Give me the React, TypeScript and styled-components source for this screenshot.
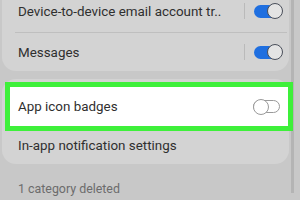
import styled, { createGlobalStyle } from "styled-components";

const GlobalStyle = createGlobalStyle`
    html, body {
        margin: 0;
        padding: 0;
        background-color: #c8c8c8;
    }
    body {
        width: 300px;
        height: 200px;
        overflow: hidden;
        font-family: Roboto, "Noto Sans", sans-serif;
    }
`;

const Screen = styled.div`
    display: flex;
    width: 300px;
    height: 200px;
`;

const Content = styled.div`
    display: flex;
    flex-direction: column;
    width: 287px;
    margin-left: 2px;
`;

const ScrollTrack = styled.div`
    width: 3px;
    height: 193px;
    margin-left: 2px;
    background-color: #b4b4b4;
`;

const Card = styled.div<{ $top?: boolean }>`
    display: flex;
    flex-direction: column;
    background-color: #d3d3d3;
    border-radius: ${(p) => (p.$top ? "0 0 14px 14px" : "14px")};
    margin-top: ${(p) => (p.$top ? "0" : "8px")};
    padding-top: ${(p) => (p.$top ? "0" : "8px")};
`;

const Row = styled.div<{ $height: number; $pb?: number; $highlight?: boolean }>`
    display: flex;
    align-items: center;
    justify-content: space-between;
    box-sizing: border-box;
    height: ${(p) => p.$height}px;
    padding: 0 8px ${(p) => p.$pb ?? 0}px 16px;
    ${(p) =>
        p.$highlight &&
        `
        background-color: #ffffff;
        outline: 5px solid #3ef03a;
        margin: 0 1px 0 8px;
        padding-left: 8px;
        padding-right: 8px;
        position: relative;
    `}
`;

const Label = styled.span`
    font-size: 13.4px;
    color: #2f2f2f;
    white-space: nowrap;
`;

const Divider = styled.div`
    height: 1px;
    margin: 0 2px 0 13px;
    background-color: #bfbfbf;
`;

const Controls = styled.div`
    display: flex;
    align-items: center;
    gap: 9px;
`;

const Separator = styled.div`
    width: 1px;
    height: 16px;
    background-color: #bababa;
`;

const Track = styled.div<{ $on: boolean }>`
    position: relative;
    box-sizing: border-box;
    width: 27px;
    height: 13px;
    border-radius: 7px;
    background-color: ${(p) => (p.$on ? "#1f6fe0" : "transparent")};
    border: ${(p) => (p.$on ? "none" : "1px solid #9a9a9a")};
`;

const Thumb = styled.div<{ $on: boolean }>`
    position: absolute;
    top: 50%;
    ${(p) => (p.$on ? "right: -2px;" : "left: -1px;")}
    box-sizing: border-box;
    width: 16px;
    height: 16px;
    margin-top: -8px;
    border-radius: 50%;
    background-color: ${(p) => (p.$on ? "#e4e4e4" : "#ffffff")};
    border: 1px solid ${(p) => (p.$on ? "#4a4f5a" : "#9a9a9a")};
`;

const Footer = styled.div`
    padding: 17px 0 0 16px;
    font-size: 12.4px;
    color: #6c6c6c;
`;

function Toggle({ on }: { on: boolean }) {
    return (
        <Track $on={on}>
            <Thumb $on={on} />
        </Track>
    );
}

export default function App() {
    return (
        <>
            <GlobalStyle />
            <Screen>
                <Content>
                    <Card $top>
                        <Row $height={32} $pb={10}>
                            <Label>Device-to-device email account tr..</Label>
                            <Controls>
                                <Separator />
                                <Toggle on />
                            </Controls>
                        </Row>
                        <Divider />
                        <Row $height={38}>
                            <Label>Messages</Label>
                            <Controls>
                                <Separator />
                                <Toggle on />
                            </Controls>
                        </Row>
                    </Card>
                    <Card>
                        <Row $height={39} $highlight>
                            <Label>App icon badges</Label>
                            <Toggle on={false} />
                        </Row>
                        <Row $height={38}>
                            <Label>In-app notification settings</Label>
                        </Row>
                    </Card>
                    <Footer>1 category deleted</Footer>
                </Content>
                <ScrollTrack />
            </Screen>
        </>
    );
}
